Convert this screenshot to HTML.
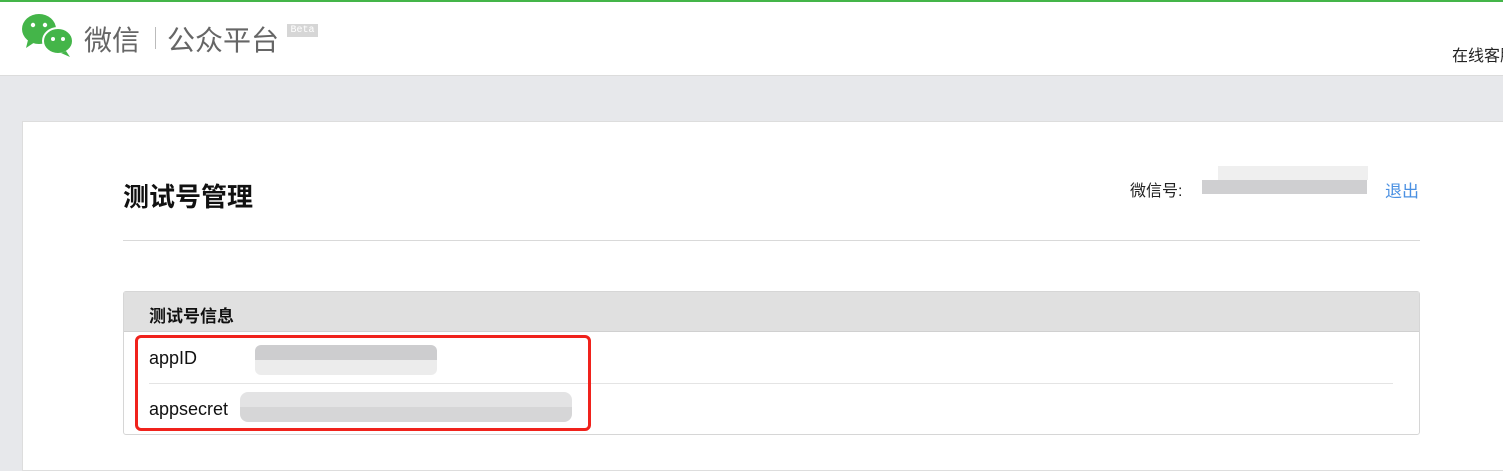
<!DOCTYPE html>
<html><head><meta charset="utf-8"><style>
*{margin:0;padding:0;box-sizing:border-box}
body{width:1503px;height:459px;overflow:hidden;background:#e7e8eb;font-family:"Liberation Sans","Noto Sans CJK SC",sans-serif;position:relative}
.a{position:absolute}
.px{position:absolute;height:14px}
</style></head><body>
<div class="a" style="left:0;top:0;width:1503px;height:76px;background:#fff;border-top:2px solid #44b549;border-bottom:1px solid #dcdcdc"></div>
<svg class="a" style="left:20px;top:12px" width="56" height="46" viewBox="0 0 56 46">
<ellipse cx="19" cy="17" rx="17" ry="15" fill="#44b549"/><path d="M8 28 L6 36 L15 30Z" fill="#44b549"/>
<ellipse cx="38" cy="29" rx="15" ry="13" fill="#44b549" stroke="#fff" stroke-width="2"/><path d="M46 39 L50 45 L41 41Z" fill="#44b549"/>
<circle cx="13" cy="13" r="2.2" fill="#fff"/><circle cx="25" cy="13" r="2.2" fill="#fff"/>
<circle cx="33" cy="27" r="2" fill="#fff"/><circle cx="43" cy="27" r="2" fill="#fff"/></svg>
<div class="a" style="left:84px;top:19px;font-size:28px;color:#666">微信</div>
<div class="a" style="left:155px;top:27px;width:1px;height:22px;background:#bbb"></div>
<div class="a" style="left:167px;top:19px;font-size:28px;color:#666">公众平台</div>
<div class="a" style="left:287px;top:24px;width:31px;height:13px;background:#d6d6d6;color:#fff;font-size:10px;font-family:'Liberation Mono',monospace;line-height:13px;text-align:center">Beta</div>
<div class="a" style="left:1452px;top:42px;font-size:16px;color:#222;white-space:nowrap">在线客服</div>
<div class="a" style="left:22px;top:121px;width:1490px;height:350px;background:#fff;border:1px solid #ddd"></div>
<div class="a" style="left:123px;top:177px;font-size:26px;font-weight:bold;color:#111">测试号管理</div>
<div class="a" style="left:1130px;top:177px;font-size:16px;color:#222">微信号:</div>
<div class="px" style="left:1202px;top:180px;width:165px;background:#cfcfd1"></div>
<div class="px" style="left:1218px;top:166px;width:150px;background:#efefef"></div>
<div class="a" style="left:1385px;top:177px;font-size:17px;color:#4a90e2">退出</div>
<div class="a" style="left:123px;top:240px;width:1297px;height:1px;background:#d9d9d9"></div>
<div class="a" style="left:123px;top:291px;width:1297px;height:144px;border:1px solid #d6d6d6;border-radius:3px;background:#fff"></div>
<div class="a" style="left:124px;top:292px;width:1295px;height:40px;background:#e0e0e0;border-bottom:1px solid #d0d0d0"></div>
<div class="a" style="left:149px;top:302px;font-size:17px;font-weight:bold;color:#111">测试号信息</div>
<div class="a" style="left:149px;top:383px;width:1244px;height:1px;background:#e4e4e4"></div>
<div class="a" style="left:149px;top:348px;font-size:18px;color:#111">appID</div>
<div class="a" style="left:149px;top:399px;font-size:18px;color:#111">appsecret</div>
<div class="px" style="left:255px;top:345px;width:182px;height:30px;background:linear-gradient(#cdcdcf 50%,#ececec 50%);border-radius:6px"></div>
<div class="px" style="left:240px;top:392px;width:332px;height:30px;background:linear-gradient(#e3e3e4 50%,#d6d6d7 50%);border-radius:8px"></div>
<div class="a" style="left:135px;top:335px;width:456px;height:96px;border:3px solid #f0221c;border-radius:6px"></div>
</body></html>
